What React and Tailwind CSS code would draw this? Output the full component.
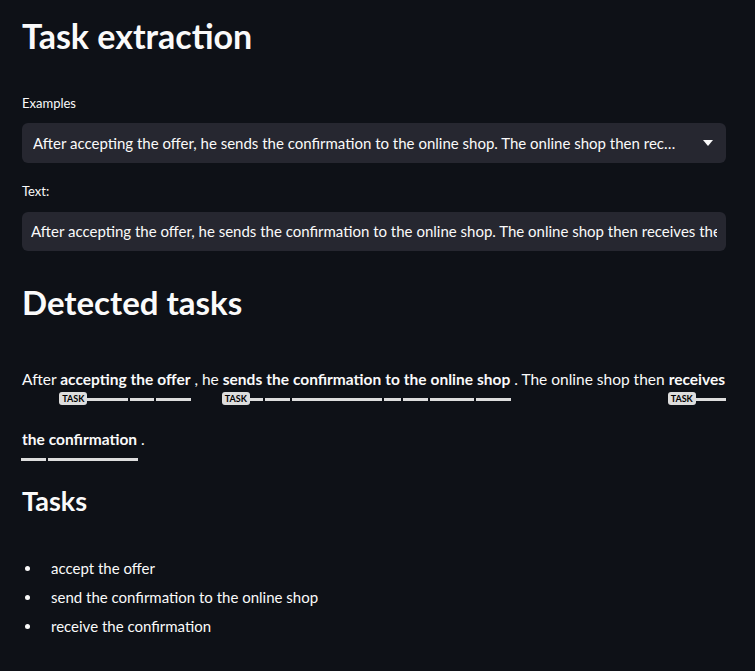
import React from 'react';

const FONT = { fontFamily: '"Source Sans Pro", Lato, "Liberation Sans", sans-serif' };

const EXAMPLE =
  'After accepting the offer, he sends the confirmation to the online shop. The online shop then receives the confirmation.';

const Token = ({ text, label }) => (
  <span className="relative inline-block h-[60px] font-bold">
    {text}
    <span className="absolute left-[-1px] top-[31px] h-[3px] w-[calc(100%+2px)] bg-[#dddddd]" />
    {label && (
      <span className="absolute left-[-1px] top-[25px] z-10 rounded-[3px] bg-[#dddddd] px-[3px] py-[2px] text-[9px] font-bold leading-none text-black">
        {label}
      </span>
    )}
  </span>
);

const Span = ({ words, cont = false }) => (
  <>
    {words.map((w, i) => (
      <React.Fragment key={i}>
        <Token text={w} label={i === 0 && !cont ? 'TASK' : null} />
        {i < words.length - 1 ? ' ' : ''}
      </React.Fragment>
    ))}
  </>
);

const Chevron = () => (
  <svg width="10" height="6" viewBox="0 0 10 6" className="shrink-0">
    <path d="M0 0 L10 0 L5 6 Z" fill="#fafafa" />
  </svg>
);

export default function App() {
  const tasks = ['accept the offer', 'send the confirmation to the online shop', 'receive the confirmation'];

  return (
    <div className="min-h-[671px] bg-[#0e1117] text-[#fafafa]" style={FONT}>
      <div className="pl-[22px] pr-[29px] pt-[16px]">
        <h1 className="text-[34px] font-bold leading-[1.2]">Task extraction</h1>

        <div className="mt-[38px] text-[13px] leading-[16px]">Examples</div>
        <div className="mt-[12px] flex h-[40px] items-center justify-between rounded-[6px] bg-[#262730] pl-[11px] pr-[13px]">
          <span className="truncate text-[15px]">
            After accepting the offer, he sends the confirmation to the online shop. The online shop then rec…
          </span>
          <span className="ml-[18px]"><Chevron /></span>
        </div>

        <div className="mt-[20px] text-[13px] leading-[16px]">Text:</div>
        <div className="mt-[13px] flex h-[39px] items-center rounded-[6px] bg-[#262730] px-[9px]">
          <div className="overflow-hidden whitespace-nowrap text-[15px]">{EXAMPLE}</div>
        </div>

        <h2 className="mt-[32px] text-[33px] font-bold leading-[1.2]">Detected tasks</h2>

        <div className="mt-[45px] text-[15.5px] leading-[24px]">
          <div className="h-[60px] whitespace-nowrap">
            After <Span words={['accepting', 'the', 'offer']} /> , he{' '}
            <Span words={['sends', 'the', 'confirmation', 'to', 'the', 'online', 'shop']} /> . The online shop then{' '}
            <Span words={['receives']} />
          </div>
          <div className="h-[60px] whitespace-nowrap">
            <Span words={['the', 'confirmation']} cont /> .
          </div>
        </div>

        <h3 className="mt-[-2px] text-[27px] font-bold leading-[1.2]">Tasks</h3>

        <ul className="mt-[36px] text-[15px] leading-[29px]">
          {tasks.map((t) => (
            <li key={t} className="flex items-center">
              <span className="ml-[3px] mr-[21px] h-[5px] w-[5px] rounded-full bg-[#fafafa]" />
              {t}
            </li>
          ))}
        </ul>
      </div>
    </div>
  );
}
